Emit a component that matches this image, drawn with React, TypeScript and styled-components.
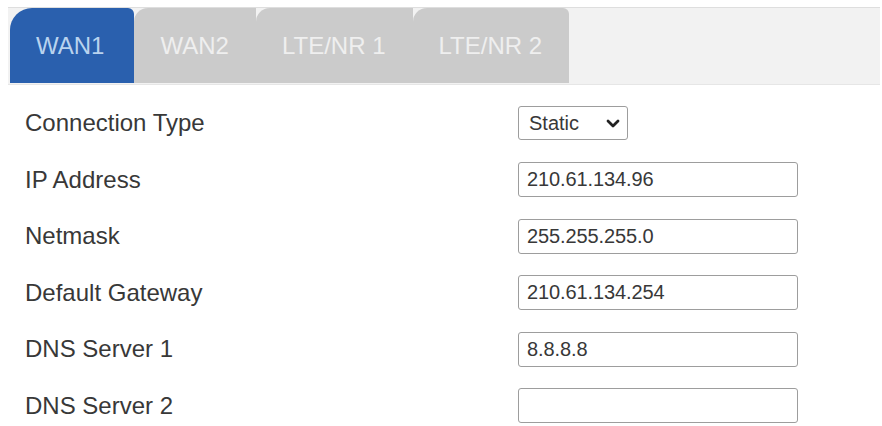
import * as React from 'react';
import styled, { createGlobalStyle } from 'styled-components';

const GlobalStyle = createGlobalStyle`
  html, body {
    margin: 0;
    padding: 0;
    background: #ffffff;
  }
  body {
    font-family: 'Liberation Sans', Arial, sans-serif;
  }
`;

const Page = styled.main`
  width: 882px;
  height: 426px;
  padding-top: 7px;
  box-sizing: border-box;
  overflow: hidden;
`;

const TabStrip = styled.nav`
  margin-left: 8px;
  width: 872px;
  height: 78px;
  box-sizing: border-box;
  border-top: 1px solid #dedede;
  border-bottom: 1px solid #e6e6e6;
  background: #f2f2f2;
  padding: 0 0 1px 2px;
  display: flex;
  align-items: stretch;
`;

const Tab = styled.div<{ $active?: boolean }>`
  display: flex;
  align-items: center;
  padding: 0 ${(p) => (p.$active ? '30px' : '27px')} 0 26px;
  font-size: 24px;
  background: ${(p) => (p.$active ? '#2a60ae' : '#cbcbcb')};
  color: ${(p) => (p.$active ? '#b9d3ee' : '#efefef')};
  border-top-left-radius: ${(p) => (p.$active ? '22px' : '14px')};
  border-top-right-radius: ${(p) => (p.$active ? '6px' : '0')};
  cursor: pointer;

  &:last-child {
    border-top-right-radius: 6px;
  }
`;

const Form = styled.section`
  padding: 10px 0 0 25px;
  display: grid;
  grid-template-columns: 493px 280px;
  grid-auto-rows: 56.5px;
  align-items: center;
`;

const Label = styled.label`
  font-size: 24px;
  color: #383838;
`;

const TextInput = styled.input`
  width: 280px;
  height: 35px;
  box-sizing: border-box;
  border: 1.5px solid #9d9d9d;
  border-radius: 3px;
  padding: 0 8px;
  font-family: 'Liberation Sans', Arial, sans-serif;
  font-size: 20px;
  letter-spacing: -0.1px;
  color: #383838;
  background: #ffffff;
  outline: none;
`;

const SelectWrap = styled.div`
  position: relative;
  width: 110px;
  height: 34px;
`;

const Select = styled.select`
  appearance: none;
  width: 110px;
  height: 34px;
  box-sizing: border-box;
  border: 1.5px solid #9d9d9d;
  border-radius: 3px;
  padding: 0 0 0 10px;
  font-family: 'Liberation Sans', Arial, sans-serif;
  font-size: 20px;
  color: #383838;
  background: #ffffff;
  outline: none;
`;

const Chevron = styled.svg`
  position: absolute;
  left: 88px;
  top: 13px;
  width: 14px;
  height: 9px;
  pointer-events: none;
`;

const tabs = ['WAN1', 'WAN2', 'LTE/NR 1', 'LTE/NR 2'];

const fields = [
  { label: 'IP Address', value: '210.61.134.96' },
  { label: 'Netmask', value: '255.255.255.0' },
  { label: 'Default Gateway', value: '210.61.134.254' },
  { label: 'DNS Server 1', value: '8.8.8.8' },
  { label: 'DNS Server 2', value: '' },
];

export default function App() {
  const [active, setActive] = React.useState(0);
  return (
    <>
      <GlobalStyle />
      <Page>
        <TabStrip>
          {tabs.map((t, i) => (
            <Tab key={t} $active={i === active} onClick={() => setActive(i)}>
              {t}
            </Tab>
          ))}
        </TabStrip>
        <Form>
          <Label>Connection Type</Label>
          <SelectWrap>
            <Select defaultValue="static">
              <option value="static">Static</option>
              <option value="dhcp">DHCP</option>
              <option value="pppoe">PPPoE</option>
            </Select>
            <Chevron viewBox="0 0 14 9">
              <path
                d="M2 2l5 5 5-5"
                fill="none"
                stroke="#222"
                strokeWidth="2.8"
                strokeLinecap="round"
                strokeLinejoin="round"
              />
            </Chevron>
          </SelectWrap>
          {fields.map((f) => (
            <React.Fragment key={f.label}>
              <Label>{f.label}</Label>
              <TextInput defaultValue={f.value} />
            </React.Fragment>
          ))}
        </Form>
      </Page>
    </>
  );
}
